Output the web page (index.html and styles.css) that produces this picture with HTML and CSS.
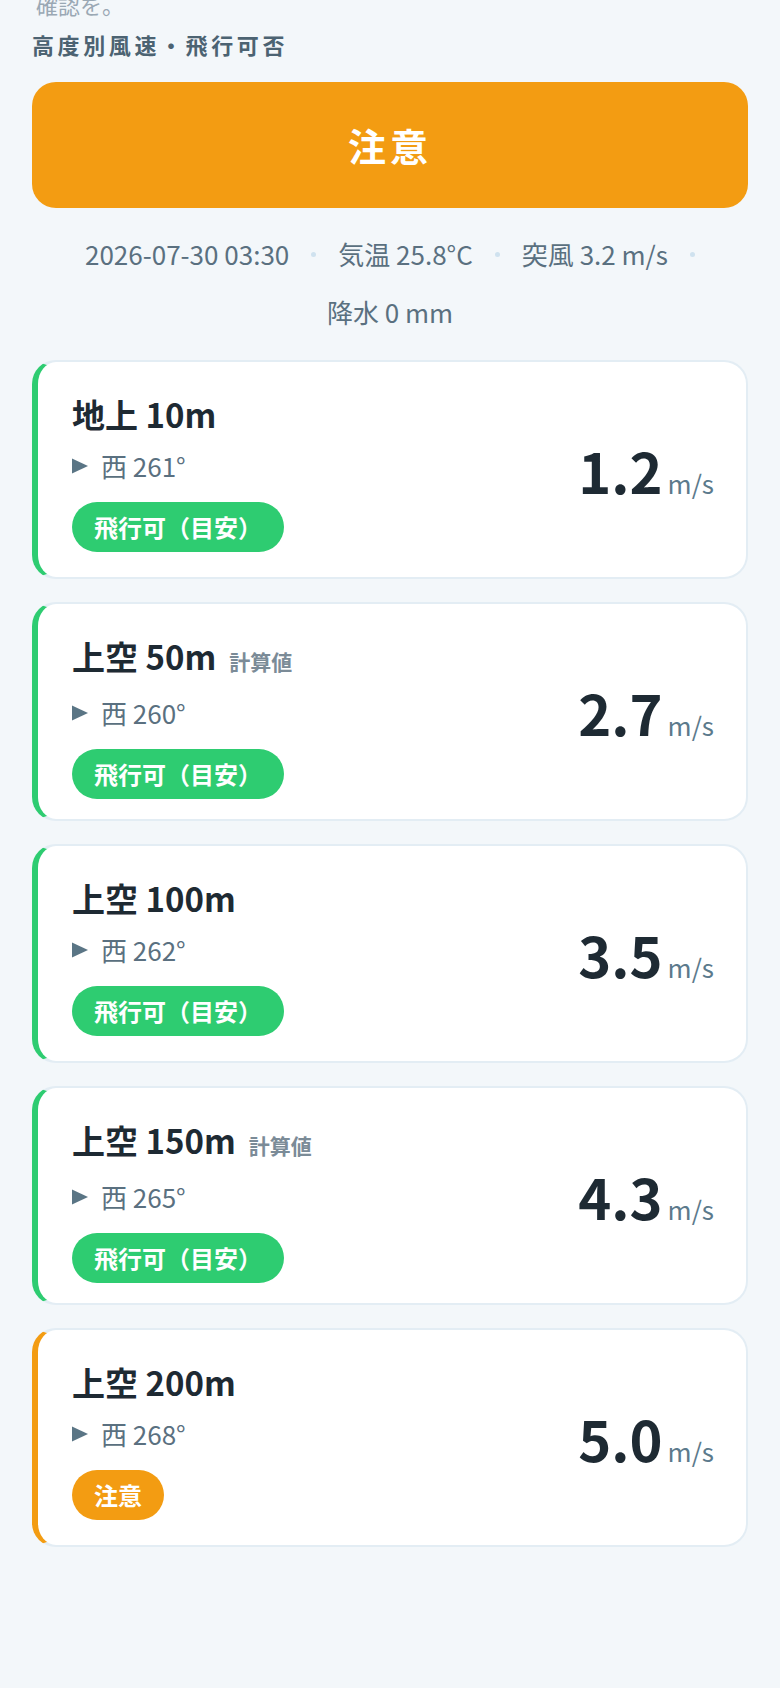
FILE: index.html
```html
<!DOCTYPE html>
<html lang="ja">
<head>
<meta charset="utf-8">
<title>高度別風速・飛行可否</title>
<link rel="stylesheet" href="styles.css">
</head>
<body>
<p class="intro">確認を。</p>
<h2 class="heading">高度別風速・飛行可否</h2>
<div class="banner">注意</div>
<div class="meta">
  <span class="meta-item">2026-07-30 03:30</span><span class="dot"></span>
  <span class="meta-item">気温 25.8°C</span><span class="dot"></span>
  <span class="meta-item">突風 3.2 m/s</span><span class="dot"></span>
  <span class="meta-item">降水 0 mm</span>
</div>
<div class="cards">
  <div class="card ok">
    <div class="info">
      <div class="title">地上 10m</div>
      <div class="dir"><svg class="tri" viewBox="0 0 16 16"><path d="M0 0.5 L16 8 L0 15.5 Z"/></svg><span>西 261°</span></div>
      <span class="badge ok">飛行可（目安）</span>
    </div>
    <div class="value"><span class="num">1.2</span><span class="unit">m/s</span></div>
  </div>
  <div class="card ok">
    <div class="info">
      <div class="title">上空 50m<span class="calc">計算値</span></div>
      <div class="dir"><svg class="tri" viewBox="0 0 16 16"><path d="M0 0.5 L16 8 L0 15.5 Z"/></svg><span>西 260°</span></div>
      <span class="badge ok">飛行可（目安）</span>
    </div>
    <div class="value"><span class="num">2.7</span><span class="unit">m/s</span></div>
  </div>
  <div class="card ok">
    <div class="info">
      <div class="title">上空 100m</div>
      <div class="dir"><svg class="tri" viewBox="0 0 16 16"><path d="M0 0.5 L16 8 L0 15.5 Z"/></svg><span>西 262°</span></div>
      <span class="badge ok">飛行可（目安）</span>
    </div>
    <div class="value"><span class="num">3.5</span><span class="unit">m/s</span></div>
  </div>
  <div class="card ok">
    <div class="info">
      <div class="title">上空 150m<span class="calc">計算値</span></div>
      <div class="dir"><svg class="tri" viewBox="0 0 16 16"><path d="M0 0.5 L16 8 L0 15.5 Z"/></svg><span>西 265°</span></div>
      <span class="badge ok">飛行可（目安）</span>
    </div>
    <div class="value"><span class="num">4.3</span><span class="unit">m/s</span></div>
  </div>
  <div class="card warn">
    <div class="info">
      <div class="title">上空 200m</div>
      <div class="dir"><svg class="tri" viewBox="0 0 16 16"><path d="M0 0.5 L16 8 L0 15.5 Z"/></svg><span>西 268°</span></div>
      <span class="badge warn">注意</span>
    </div>
    <div class="value"><span class="num">5.0</span><span class="unit">m/s</span></div>
  </div>
</div>
</body>
</html>
```
FILE: styles.css
```css
html, body {
  margin: 0;
  padding: 0;
}
body {
  background: #f3f7fa;
  font-family: "Noto Sans CJK JP", "Noto Sans", sans-serif;
  padding: 0 32px 60px;
  min-height: 1688px;
  box-sizing: border-box;
}
.intro {
  margin: -12px 0 0 4px;
  font-size: 22px;
  line-height: 32px;
  color: #9aa8b4;
}
.heading {
  margin: 9px 0 0 0;
  font-size: 22px;
  line-height: 30px;
  font-weight: 700;
  color: #4c6372;
  letter-spacing: 3.6px;
}
.banner {
  margin-top: 23px;
  height: 126px;
  line-height: 126px;
  background: #f39c12;
  border-radius: 24px;
  color: #ffffff;
  font-size: 38px;
  font-weight: 700;
  text-align: center;
  letter-spacing: 4px;
}
.meta {
  margin-top: 29px;
  display: flex;
  flex-wrap: wrap;
  justify-content: center;
  align-items: center;
  column-gap: 22px;
  row-gap: 24px;
  font-size: 26px;
  line-height: 34px;
  color: #5a7080;
}
.dot {
  width: 5px;
  height: 5px;
  border-radius: 50%;
  background: #cfe2ef;
}
.cards {
  margin-top: 31px;
  display: flex;
  flex-direction: column;
  gap: 23px;
}
.card {
  box-sizing: border-box;
  height: 219px;
  background: #ffffff;
  border: 2px solid #e3edf4;
  border-left: 6px solid #2ecc71;
  border-radius: 24px;
  padding: 34px 32px 26px 34px;
  display: flex;
  justify-content: space-between;
  align-items: center;
}
.card.warn {
  border-left-color: #f39c12;
}
.info {
  display: flex;
  flex-direction: column;
  align-items: flex-start;
  align-self: stretch;
}
.title {
  font-size: 33px;
  line-height: 36px;
  font-weight: 700;
  color: #1e2a33;
  display: flex;
  align-items: baseline;
}
.calc {
  margin-left: 13px;
  font-size: 21px;
  font-weight: 700;
  color: #7b8b97;
}
.dir {
  margin-top: 17px;
  display: flex;
  align-items: center;
  font-size: 26px;
  line-height: 34px;
  color: #5a7080;
}
.tri {
  width: 16px;
  height: 16px;
  fill: #5a7585;
  margin-right: 13px;
}
.badge {
  margin-top: 19px;
  height: 50px;
  line-height: 50px;
  padding: 0 22px;
  border-radius: 25px;
  color: #ffffff;
  font-size: 24px;
  font-weight: 700;
}
.badge.ok {
  background: #2ecc71;
}
.badge.warn {
  background: #f39c12;
}
.value {
  display: flex;
  align-items: baseline;
  gap: 5px;
  margin-top: -5px;
}
.num {
  font-size: 56px;
  font-weight: 700;
  color: #1e2a33;
  line-height: 1;
}
.unit {
  font-size: 26px;
  color: #5c7a8c;
}
```
